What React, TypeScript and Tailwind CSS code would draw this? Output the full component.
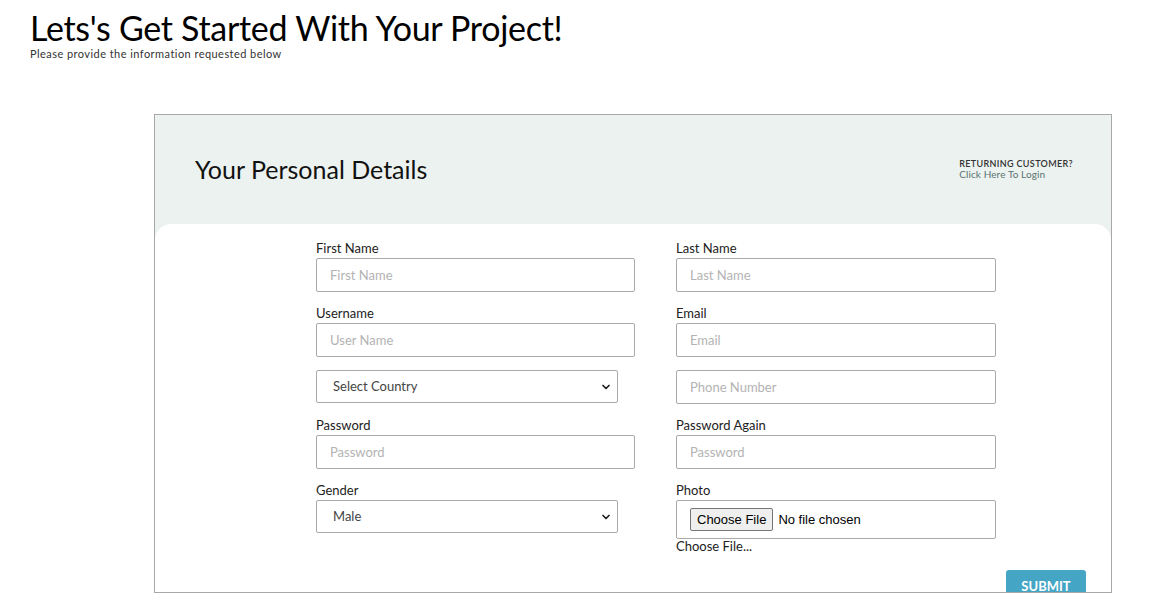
import { ChevronDown } from "lucide-react";

function Field({ label, placeholder, type = "text" }: { label?: string; placeholder: string; type?: string }) {
  return (
    <div className="flex flex-col">
      {label && <label className="text-[13px] leading-[16px] mb-[2px] text-[#222]">{label}</label>}
      <input
        type={type}
        placeholder={placeholder}
        className="h-[34px] w-full border border-[#aaa] rounded-[2px] px-[13px] text-[13px] text-[#333] placeholder:text-[#b3b3b3] bg-white outline-none"
      />
    </div>
  );
}

function Select({ label, value }: { label?: string; value: string }) {
  return (
    <div className="flex flex-col">
      {label && <label className="text-[13px] leading-[16px] mb-[2px] text-[#222]">{label}</label>}
      <div className="relative w-[302px]">
        <select
          defaultValue={value}
          className="appearance-none h-[33px] w-full border border-[#aaa] rounded-[2px] pl-[16px] text-[13px] text-[#444] bg-white outline-none"
        >
          <option>{value}</option>
        </select>
        <ChevronDown className="absolute right-[6px] top-[11px] w-[12px] h-[12px] text-[#222] pointer-events-none" strokeWidth={3.5} />
      </div>
    </div>
  );
}

export default function App() {
  return (
    <div className="min-h-screen bg-white font-['Lato',sans-serif] text-[#111]">
      {/* Page heading */}
      <div className="pl-[30px] pt-[8px]">
        <h1 className="text-[34px] leading-[40px] text-black tracking-[-0.3px]">Lets's Get Started With Your Project!</h1>
        <p className="text-[11px] leading-[12px] text-[#333] tracking-[0.45px]">Please provide the information requested below</p>
      </div>

      {/* Card */}
      <div className="ml-[154px] mt-[54px] w-[958px] h-[479px] border border-[#a8a8a8] bg-[#ecf2ef] overflow-hidden flex flex-col">
        <div className="h-[109px] flex items-center justify-between pl-[40px] pr-[38px] shrink-0">
          <h2 className="text-[25px] text-[#111]">Your Personal Details</h2>
          <div className="flex flex-col leading-[11px] mb-[2px]">
            <span className="text-[9px] font-semibold text-[#333] uppercase tracking-[0.35px]">Returning Customer?</span>
            <a className="text-[10px] text-[#5a7272] cursor-pointer tracking-[0.1px]">Click Here To Login</a>
          </div>
        </div>

        <div className="flex-1 bg-white rounded-t-[16px] pt-[16px] pl-[161px]">
          <div className="grid grid-cols-[319px_320px] gap-x-[41px] gap-y-[13px] items-start">
            <Field label="First Name" placeholder="First Name" />
            <Field label="Last Name" placeholder="Last Name" />
            <Field label="Username" placeholder="User Name" />
            <Field label="Email" placeholder="Email" type="email" />
            <Select value="Select Country" />
            <Field placeholder="Phone Number" />
            <Field label="Password" placeholder="Password" type="password" />
            <Field label="Password Again" placeholder="Password" type="password" />
            <Select label="Gender" value="Male" />
            <div className="flex flex-col">
              <label className="text-[13px] leading-[16px] mb-[2px] text-[#222]">Photo</label>
              <div className="h-[39px] border border-[#aaa] rounded-[2px] px-[13px] flex items-center bg-white">
                <input
                  type="file"
                  className="font-['Liberation_Sans',sans-serif] text-[13px] text-black file:mr-[5px] file:border file:border-[#767676] file:bg-[#efefef] file:rounded-[2px] file:px-[6px] file:py-[1px] file:text-[13px] file:text-black"
                />
              </div>
              <span className="text-[13px] leading-[15px] text-[#222]">Choose File...</span>
            </div>
          </div>

          <div className="flex justify-end pr-[25px] mt-[16px]">
            <button className="w-[80px] h-[34px] bg-[#45a5c5] rounded-[3px] text-white text-[13px] font-bold leading-[14px] pt-[9px] flex justify-center items-start">SUBMIT</button>
          </div>
        </div>
      </div>
    </div>
  );
}
